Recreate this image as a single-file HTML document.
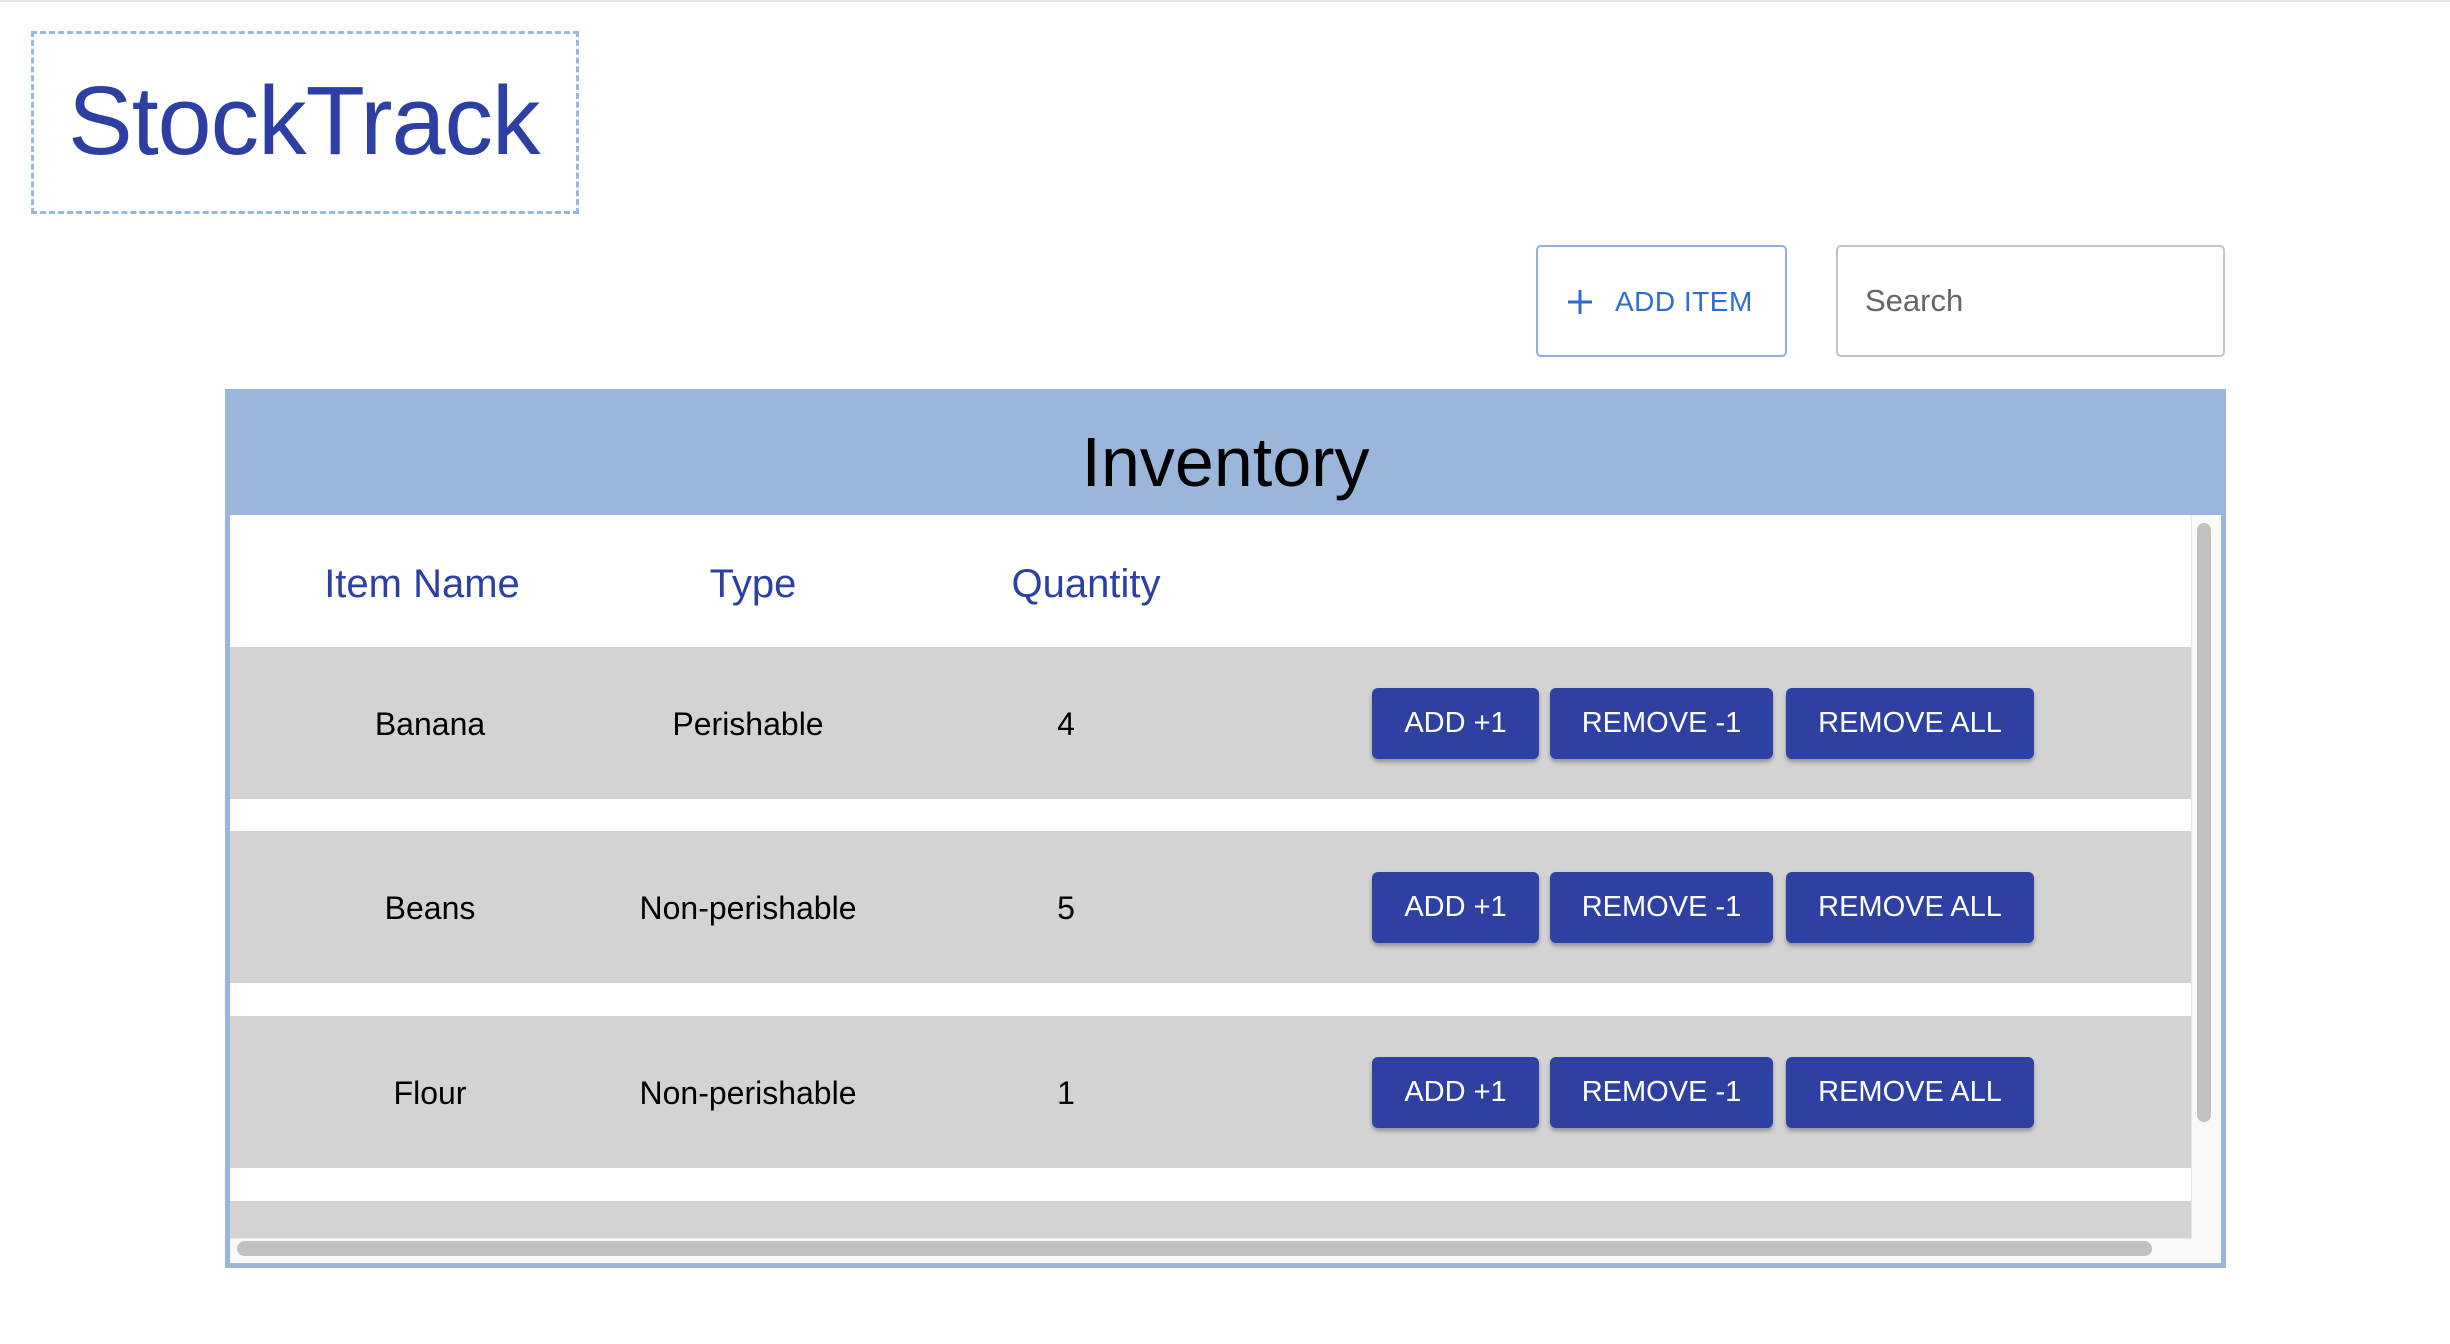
<!DOCTYPE html>
<html><head><meta charset="utf-8"><style>
*{box-sizing:border-box;margin:0;padding:0}
body{width:2450px;height:1344px;background:#fff;position:relative;overflow:hidden;font-family:"Liberation Sans",Arial,sans-serif}
.abs{position:absolute}
.logo{left:31px;top:31px;width:548px;height:183px;border:3px dashed #9ab8dc;}
.logo span{position:absolute;left:34px;top:38px;font-size:97px;color:#2d3fa3;line-height:1;letter-spacing:-1px}
.addbtn{left:1536px;top:245px;width:251px;height:112px;border:2px solid #8fb0e0;border-radius:5px;color:#2f6cd0;font-size:28px;}
.addbtn .t{position:absolute;left:77px;top:39px;letter-spacing:0.5px}
.search{left:1836px;top:245px;width:389px;height:112px;border:2px solid #c4c4c4;border-radius:5px;color:#666;font-size:31px}
.search span{position:absolute;left:27px;top:36px}
.wrap{left:225px;top:389px;width:2001px;height:879px;border:5px solid #9ab7db;background:#fafafa}
.head{left:0;top:0;width:1991px;height:121px;background:#9ab7db;text-align:center;font-size:70px;line-height:136px;color:#000}
.colh{top:121px;height:132px;left:0;width:1961px;background:#fff}
.h{position:absolute;top:47px;transform:translateX(-50%);color:#2d3fa3;font-size:40px;white-space:nowrap}
.row{left:0;width:1961px;height:152px;background:#d3d3d3}
.c{position:absolute;top:59px;transform:translateX(-50%);font-size:32px;color:#000;white-space:nowrap}
.b{position:absolute;top:41px;height:71px;background:#2e41a3;color:#fff;border-radius:6px;font-size:29px;text-align:center;line-height:71px;box-shadow:0 3px 4px rgba(0,0,0,.3)}
.gap{left:0;width:1961px;background:#fff}
</style></head><body>
<div class="abs" style="left:0;top:0;width:2450px;height:2px;background:#e5e5e5"></div>
<div class="abs logo"><span>StockTrack</span></div>
<div class="abs addbtn"><svg style="position:absolute;left:29px;top:42px" width="26" height="26" viewBox="0 0 26 26"><path d="M13 1v24M1 13h24" stroke="#2f6cd0" stroke-width="3"/></svg><span class="t">ADD ITEM</span></div>
<div class="abs search"><span>Search</span></div>
<div class="abs wrap">
 <div class="abs head">Inventory</div>
 <div class="abs colh">
  <span class="h" style="left:192px">Item Name</span>
  <span class="h" style="left:523px">Type</span>
  <span class="h" style="left:856px">Quantity</span>
 </div>
 <div class="abs row" style="top:253px">
  <span class="c" style="left:200px">Banana</span><span class="c" style="left:518px">Perishable</span><span class="c" style="left:836px">4</span>
  <div class="b" style="left:1142px;width:167px">ADD +1</div><div class="b" style="left:1320px;width:223px">REMOVE -1</div><div class="b" style="left:1556px;width:248px">REMOVE ALL</div>
 </div>
 <div class="abs gap" style="top:405px;height:32px"></div>
 <div class="abs row" style="top:437px">
  <span class="c" style="left:200px">Beans</span><span class="c" style="left:518px">Non-perishable</span><span class="c" style="left:836px">5</span>
  <div class="b" style="left:1142px;width:167px">ADD +1</div><div class="b" style="left:1320px;width:223px">REMOVE -1</div><div class="b" style="left:1556px;width:248px">REMOVE ALL</div>
 </div>
 <div class="abs gap" style="top:589px;height:33px"></div>
 <div class="abs row" style="top:622px">
  <span class="c" style="left:200px">Flour</span><span class="c" style="left:518px">Non-perishable</span><span class="c" style="left:836px">1</span>
  <div class="b" style="left:1142px;width:167px">ADD +1</div><div class="b" style="left:1320px;width:223px">REMOVE -1</div><div class="b" style="left:1556px;width:248px">REMOVE ALL</div>
 </div>
 <div class="abs gap" style="top:774px;height:33px"></div>
 <div class="abs row" style="top:807px;height:37px"></div>
 <div class="abs" style="left:1961px;top:121px;width:1px;height:723px;background:#e6e6e6"></div>
 <div class="abs" style="left:1967px;top:129px;width:14px;height:599px;background:#c1c1c1;border-radius:7px"></div>
 <div class="abs" style="left:0;top:844px;width:1961px;height:1px;background:#e6e6e6"></div>
 <div class="abs" style="left:7px;top:847px;width:1915px;height:15px;background:#c1c1c1;border-radius:8px"></div>
</div>
</body></html>
